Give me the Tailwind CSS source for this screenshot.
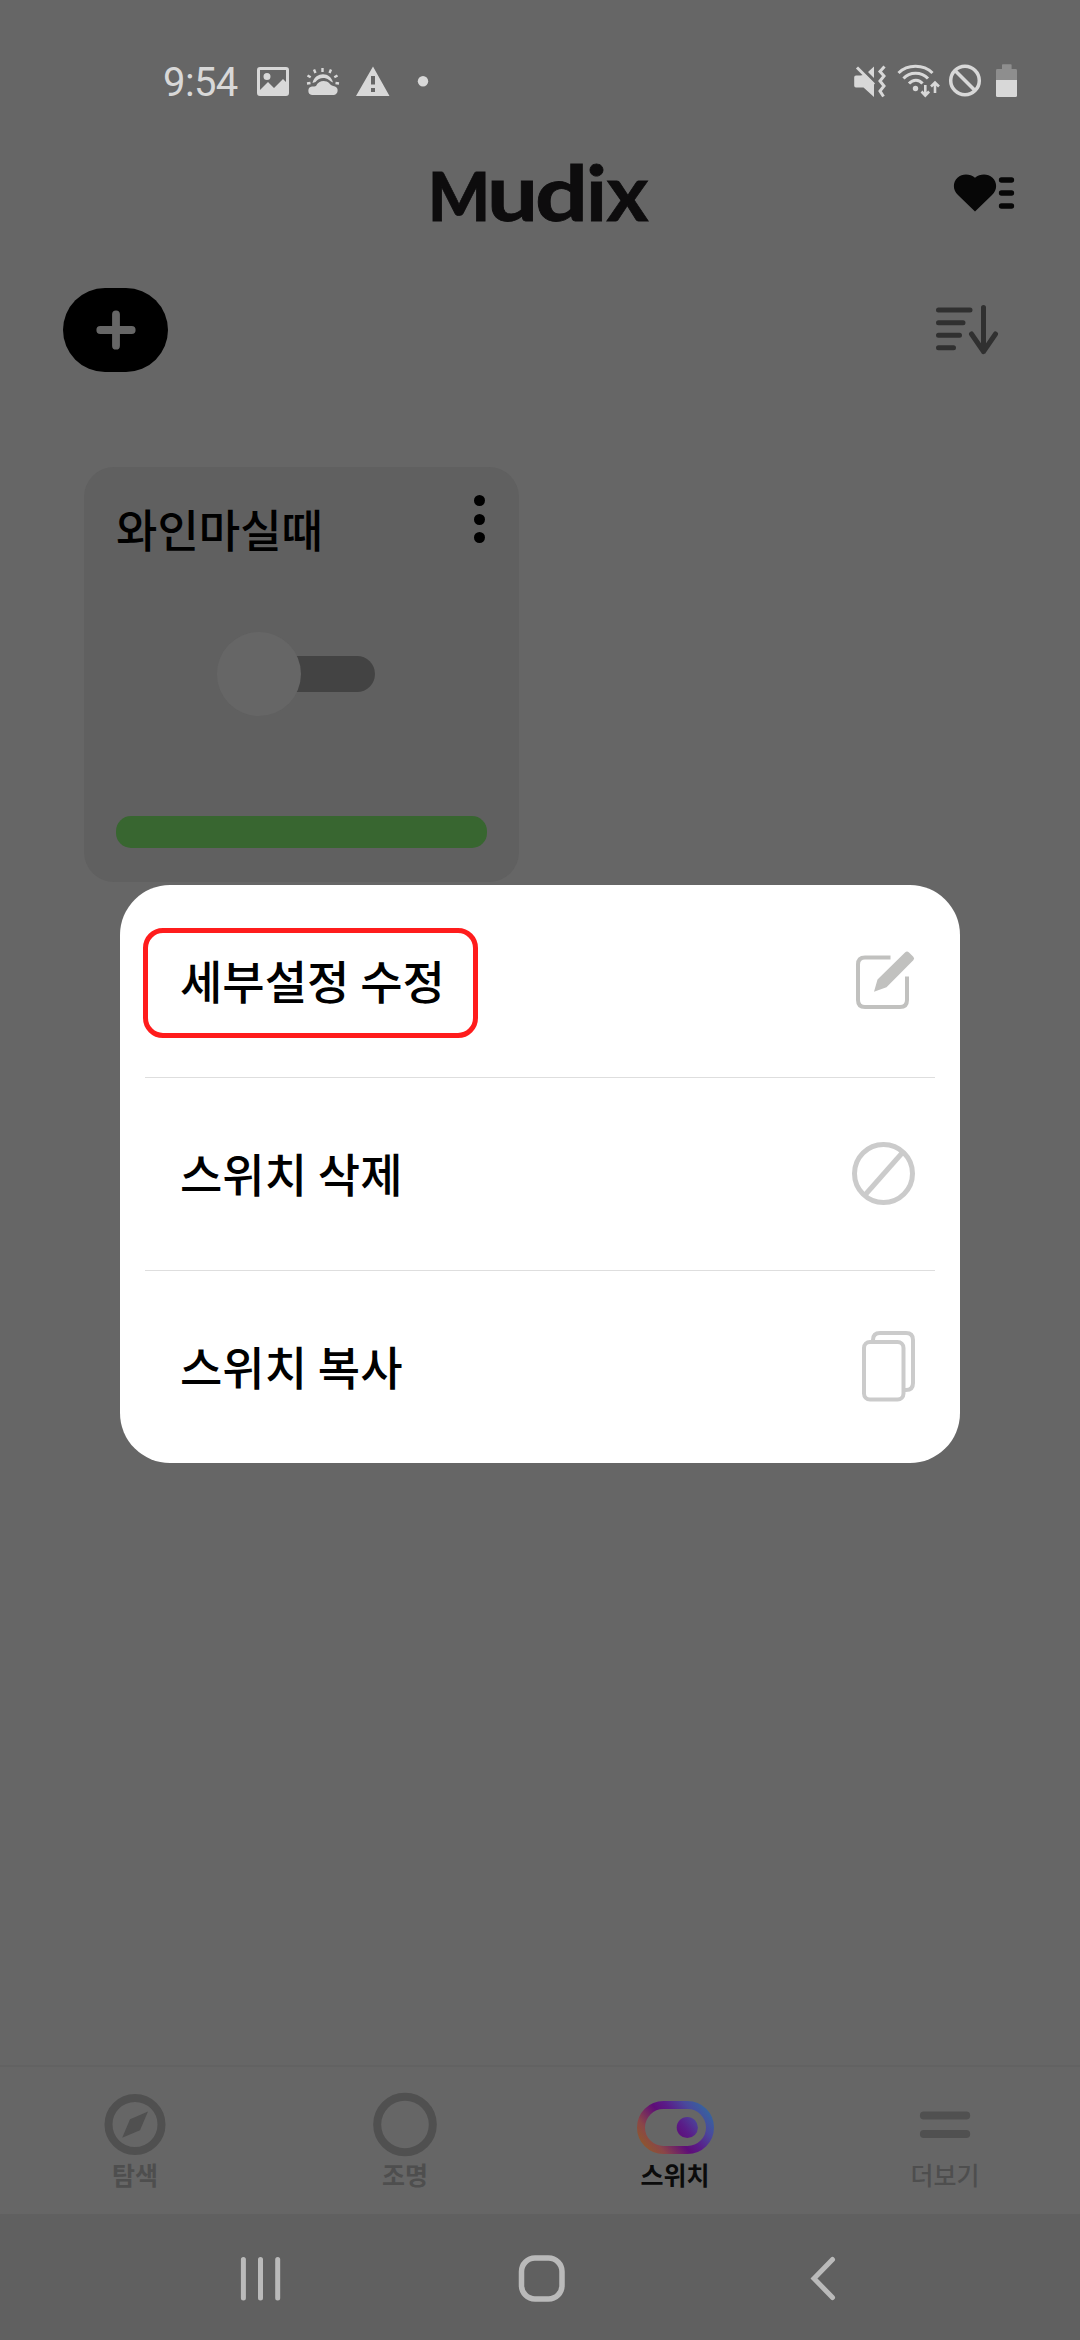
<!DOCTYPE html>
<html lang="ko">
<head>
<meta charset="utf-8">
<title>Mudix</title>
<script src="https://cdn.jsdelivr.net/npm/@tailwindcss/browser@4"></script>
</head>
<body class="bg-[#666666]">
<div class="relative flex h-[2340px] w-[1080px] flex-col overflow-hidden bg-[#666666] font-['Noto_Sans_CJK_KR',sans-serif] text-black">

  <!-- Status bar -->
  <div class="flex h-[120px] shrink-0 items-start justify-between pt-[60px] pr-[63px] pl-[163px] text-[#d8d8d8]">
    <div class="flex h-[44px] items-center">
      <span class="w-[94px] pt-[2px] font-[Roboto,sans-serif] text-[40px] leading-[44px] tracking-[-0.6px]">9:54</span>
      <svg class="h-[44px] w-[180px]" viewBox="257 60 180 44" fill="currentColor">
        <path fill-rule="evenodd" d="M260 67h26q3 0 3 3v23q0 3-3 3h-26q-3 0-3-3V70q0-3 3-3zM260 70v20l8-8 6 6 9-9 3 3V70zM267 73a3.500 3.500 0 1 1 0 7 3.500 3.500 0 0 1 0-7z"/>
        <path d="M312 95h22a4.500 4.500 0 0 0 1-8.500c-2.500-.5-4-1-5.500-3-4-4-11-3-13.500 2.500-1 .500-2 .500-4 .500a4.300 4.300 0 0 0 0 8.500z"/>
        <path d="M312.500 83c1.500-6 6-8.700 10.500-8.700 5 0 8.500 3 10 8.200-1.500-.5-2.500-1.500-4-2.500-4.500-3-10-2.500-13.500 2z"/>
        <path fill="none" stroke="currentColor" stroke-width="2.400" d="M322.500 68v4M331 69.500l-1.500 3.500M314 69.500l1.500 3.500M337.500 75.500l-3.200 1.800M307.500 75.500l3.200 1.800M339 83.500l-3.500-.5M307 83.500l3.500-.5"/>
        <path fill-rule="evenodd" d="M373 66.500l16.500 29.500h-33.500zM371 76v8.500h4V76zM371 88v4h4v-4z"/>
        <circle cx="423" cy="81.300" r="5.200"/>
      </svg>
    </div>
    <svg class="h-[44px] w-[164px]" viewBox="853 60 164 44" fill="currentColor">
      <path d="M856 75.500h4.500l5-1 8.500 8.500v14L863.500 87.500H856q-1.800 0-1.800-1.800v-8.500q0-1.700 1.800-1.700zM874 66.500v11.500l-6-6z"/>
      <g fill="none" stroke="currentColor" stroke-width="3">
        <path d="M857 67.500l17 17"/>
        <path d="M884.500 66.500l-4.500 5 4 4.500-4 5 4 5-4 5 3.500 5.500"/>
        <path d="M898.500 73c9-9 25-9 34 0M903.500 78.500c6-7 18-7 24.500 0M909 83.500c4-4.500 10-4.500 13.500 0"/>
        <path stroke-width="2.600" d="M925.300 85v10M921.500 91.500l3.800 4 3.800-4M935 93V83M931 86.500l4-4 4 4"/>
        <circle cx="965" cy="80.500" r="14.300" stroke-width="3.500"/>
        <path stroke-width="3.500" d="M955 70.500l20 20"/>
      </g>
      <circle cx="915.500" cy="88.500" r="2.700"/>
      <path fill="#8e8e8e" d="M1002 69v-4q0-.8.800-.800h8q.8 0 .8.800v4h4q1.400 0 1.400 1.400V80h-21v-9.600q0-1.400 1.400-1.400z"/>
      <path d="M996 80h21v15.500q0 1.500-1.500 1.500h-18q-1.500 0-1.500-1.500z"/>
    </svg>
  </div>

  <!-- App header -->
  <header class="flex h-[150px] shrink-0 items-center justify-between pr-[63px] pl-[420px]">
    <svg class="h-[130px] w-[240px]" viewBox="420 130 240 130" fill="#0d0c0d" stroke="#0d0c0d" stroke-width="0.800" font-family="Lato, sans-serif" font-weight="700">
      <text y="221"><tspan x="428" font-size="67" font-weight="900" textLength="62" lengthAdjust="spacingAndGlyphs">M</tspan><tspan x="487" font-size="79" textLength="51" lengthAdjust="spacingAndGlyphs">u</tspan><tspan x="535" font-size="76" textLength="53" lengthAdjust="spacingAndGlyphs">d</tspan><tspan x="586" font-size="77" textLength="21" lengthAdjust="spacingAndGlyphs">i</tspan><tspan x="606.500" font-size="79" textLength="42" lengthAdjust="spacingAndGlyphs">x</tspan></text>
    </svg>
    <svg class="h-[50px] w-[64px]" viewBox="953 169.500 64 50">
      <path fill="#070707" d="M975 211l-17-16.500c-5.500-5-5.300-13-.5-17.300 5-4.500 12.500-4 17.500 0 5-4 12.500-4.500 17.500 0 4.800 4.300 5 12.300-.5 17.300z"/>
      <path stroke="#070707" stroke-width="5.300" stroke-linecap="round" d="M1001.500 179.500h10M1001.500 192.500h10M1001.500 205.500h10"/>
    </svg>
  </header>

  <!-- Toolbar -->
  <div class="mt-[18px] flex h-[84px] shrink-0 items-center justify-between pr-[80px] pl-[63px]">
    <button class="flex h-[84px] w-[105px] items-center justify-center rounded-[42px] bg-black">
      <svg class="size-[40px]" viewBox="0 0 40 40"><path stroke="#666" stroke-width="7.800" stroke-linecap="round" d="M20 4.300v31.400M4.300 20h31.400"/></svg>
    </button>
    <svg class="h-[54px] w-[66px]" viewBox="934 303 66 54" fill="none" stroke="#303030" stroke-width="5" stroke-linecap="round" stroke-linejoin="round">
      <path d="M938.500 310h31.500M938.500 322.700h24.500M938.500 335.300h21M938.500 347.700h15M983.500 307.500V351.500M971.500 334l12 17.500 12-17.500"/>
    </svg>
  </div>

  <!-- Switch list -->
  <main class="flex-1 pt-[95px] pl-[84px]">
    <section class="flex h-[415px] w-[435px] flex-col rounded-[30px] bg-[#606060] pr-[32px] pl-[32px]">
      <div class="flex h-[125px] justify-between pt-[28px]">
        <h2 class="text-[45px] leading-[68px] font-medium">와인마실때</h2>
        <div class="flex flex-col gap-[7.500px] pr-[2px]">
          <i class="size-[11px] rounded-full bg-black"></i>
          <i class="size-[11px] rounded-full bg-black"></i>
          <i class="size-[11px] rounded-full bg-black"></i>
        </div>
      </div>
      <div class="ml-[101px] mt-[40px] flex h-[84px] w-[158px] items-center">
        <div class="z-10 size-[84px] shrink-0 rounded-full bg-[#666666]"></div>
        <div class="-ml-5 h-[36px] w-[94px] rounded-r-full bg-[#434343]"></div>
      </div>
      <div class="mt-[100px] h-[32px] w-[371px] rounded-[15px] bg-[#386630]"></div>
    </section>
  </main>

  <!-- Tab bar -->
  <nav class="grid h-[149px] shrink-0 grid-cols-4 border-t-2 border-[#626262] text-center text-[25px] leading-[36px] font-bold text-[#4e4e4e]">
    <div class="flex flex-col items-center pt-[22px]">
      <svg class="h-[70px] w-[80px]" viewBox="95 2089 80 70"><circle cx="135" cy="2124.500" r="26.500" fill="none" stroke="#505050" stroke-width="8"/><path fill="#505050" d="M148 2111.500l-18 7.800-7.800 18.500 17.800-7.600z"/></svg>
      <span class="-mt-[3px]">탐색</span>
    </div>
    <div class="flex flex-col items-center pt-[22px]">
      <svg class="h-[70px] w-[80px]" viewBox="365 2089 80 70"><circle cx="405" cy="2124.500" r="27.800" fill="none" stroke="#505050" stroke-width="8"/></svg>
      <span class="-mt-[3px]">조명</span>
    </div>
    <div class="flex flex-col items-center pt-[22px] text-[#0b0b0b]">
      <svg class="h-[70px] w-[80px]" viewBox="636 2089 80 70">
        <defs><linearGradient id="sw" gradientUnits="userSpaceOnUse" x1="646" y1="2153" x2="707" y2="2105">
          <stop offset="0" stop-color="#8f5a28"/><stop offset=".2" stop-color="#8a4648"/><stop offset=".46" stop-color="#5e0d78"/><stop offset=".6" stop-color="#5a1c88"/><stop offset=".8" stop-color="#4a489c"/><stop offset="1" stop-color="#34669f"/>
        </linearGradient></defs>
        <rect x="642" y="2105" width="69" height="45" rx="22.500" fill="none" stroke="url(#sw)" stroke-width="8"/>
        <circle cx="688.300" cy="2127.500" r="10.600" fill="url(#sw)"/>
      </svg>
      <span class="-mt-[3px]">스위치</span>
    </div>
    <div class="flex flex-col items-center pt-[22px] font-medium">
      <svg class="h-[70px] w-[80px]" viewBox="904 2089 80 70"><path stroke="#505050" stroke-width="7.800" stroke-linecap="round" d="M922.800 2115.500h42.500M922.800 2134h42.500"/></svg>
      <span class="-mt-[3px]">더보기</span>
    </div>
  </nav>

  <!-- System navigation -->
  <div class="h-[126px] shrink-0 bg-[#606060]">
    <svg class="h-[126px] w-[1080px]" viewBox="0 2214 1080 126" fill="none" stroke="#bababa" stroke-width="5" stroke-linecap="round">
      <path d="M243.400 2259.500v38.500M260.500 2259.500v38.500M277.700 2259.500v38.500"/>
      <rect x="521.500" y="2258" width="40.500" height="41" rx="13.500" stroke-width="5.500"/>
      <path stroke-linejoin="miter" d="M832.500 2259.500l-18.500 19 18.500 19"/>
    </svg>
  </div>

  <!-- Action sheet -->
  <div class="absolute top-[885px] left-[120px] flex h-[578px] w-[840px] flex-col rounded-[50px] bg-white px-[25px] text-[46px] leading-[68px] font-medium [word-spacing:-2px]">
    <div class="relative flex h-[193px] items-center justify-between border-b border-[#dedede] pr-[17px] pl-[35px]">
      <span class="pb-[4px]">세부설정 수정</span>
      <div class="absolute top-[43px] -left-[2px] h-[110px] w-[335px] rounded-[20px] border-[5px] border-[#ff1c1c]"></div>
      <svg class="h-[70px] w-[66px]" viewBox="852 946.500 66 70">
        <path fill="none" stroke="#c1c1bf" stroke-width="4" d="M890.500 958h-25.500q-7 0-7 7v35.500q0 7 7 7h35q7 0 7-7V977"/>
        <path fill="#c1c1bf" d="M874 992.300l3.500-12.300 27.500-27q2-2 4 0l4.300 4.300q1.700 1.700 0 3.500l-26.800 27z"/>
      </svg>
    </div>
    <div class="flex h-[193px] items-center justify-between border-b border-[#dedede] pr-[17px] pl-[35px]">
      <span class="pb-[4px]">스위치 삭제</span>
      <svg class="h-[70px] w-[66px]" viewBox="852 1139 66 70" fill="none" stroke="#cbcbcb" stroke-width="5"><circle cx="883.500" cy="1173.500" r="29"/><path d="M865 1195l38-43"/></svg>
    </div>
    <div class="flex h-[192px] items-center justify-between pr-[17px] pl-[35px]">
      <span class="pb-[4px]">스위치 복사</span>
      <svg class="h-[80px] w-[66px]" viewBox="852 1327 66 80" fill="none" stroke="#cbcbcb" stroke-width="4"><rect x="864" y="1342" width="39.500" height="57.500" rx="6"/><path d="M873 1342v-2q0-7 7-7h26q7 0 7 7v43q0 7-7 7h-2.500"/></svg>
    </div>
  </div>
</div>
</body>
</html>
